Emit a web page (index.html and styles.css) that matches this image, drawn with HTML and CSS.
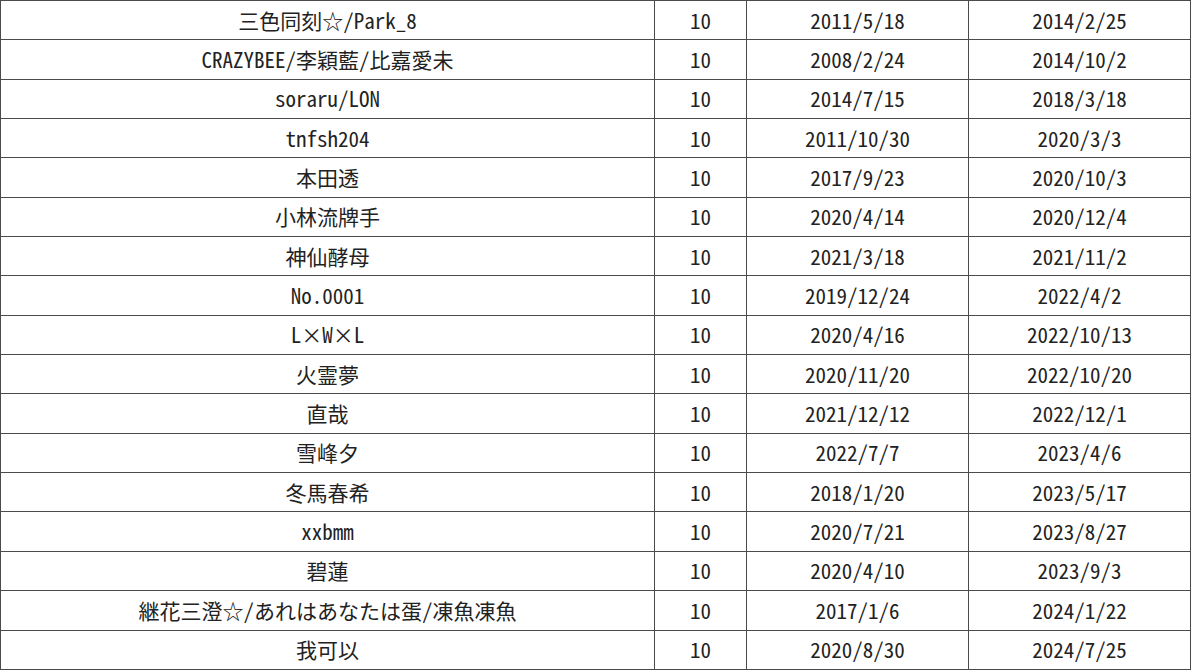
FILE: index.html
```html
<!DOCTYPE html>
<html lang="ja">
<head>
<meta charset="utf-8">
<title>記録</title>
<link rel="stylesheet" href="styles.css">
</head>
<body>
<div class="sheet">
  <div class="cell">三色同刻☆/Park_8</div><div class="cell">10</div><div class="cell">2011/5/18</div><div class="cell">2014/2/25</div>
  <div class="cell">CRAZYBEE/李穎藍/比嘉愛未</div><div class="cell">10</div><div class="cell">2008/2/24</div><div class="cell">2014/10/2</div>
  <div class="cell">soraru/LON</div><div class="cell">10</div><div class="cell">2014/7/15</div><div class="cell">2018/3/18</div>
  <div class="cell">tnfsh204</div><div class="cell">10</div><div class="cell">2011/10/30</div><div class="cell">2020/3/3</div>
  <div class="cell">本田透</div><div class="cell">10</div><div class="cell">2017/9/23</div><div class="cell">2020/10/3</div>
  <div class="cell">小林流牌手</div><div class="cell">10</div><div class="cell">2020/4/14</div><div class="cell">2020/12/4</div>
  <div class="cell">神仙酵母</div><div class="cell">10</div><div class="cell">2021/3/18</div><div class="cell">2021/11/2</div>
  <div class="cell">No.0001</div><div class="cell">10</div><div class="cell">2019/12/24</div><div class="cell">2022/4/2</div>
  <div class="cell">L×W×L</div><div class="cell">10</div><div class="cell">2020/4/16</div><div class="cell">2022/10/13</div>
  <div class="cell">火霊夢</div><div class="cell">10</div><div class="cell">2020/11/20</div><div class="cell">2022/10/20</div>
  <div class="cell">直哉</div><div class="cell">10</div><div class="cell">2021/12/12</div><div class="cell">2022/12/1</div>
  <div class="cell">雪峰夕</div><div class="cell">10</div><div class="cell">2022/7/7</div><div class="cell">2023/4/6</div>
  <div class="cell">冬馬春希</div><div class="cell">10</div><div class="cell">2018/1/20</div><div class="cell">2023/5/17</div>
  <div class="cell">xxbmm</div><div class="cell">10</div><div class="cell">2020/7/21</div><div class="cell">2023/8/27</div>
  <div class="cell">碧蓮</div><div class="cell">10</div><div class="cell">2020/4/10</div><div class="cell">2023/9/3</div>
  <div class="cell">継花三澄☆/あれはあなたは蛋/凍魚凍魚</div><div class="cell">10</div><div class="cell">2017/1/6</div><div class="cell">2024/1/22</div>
  <div class="cell">我可以</div><div class="cell">10</div><div class="cell">2020/8/30</div><div class="cell">2024/7/25</div>
</div>
</body>
</html>
```

FILE: styles.css
```css
html, body {
  margin: 0;
  padding: 0;
  background: #ffffff;
}

.sheet {
  display: grid;
  grid-template-columns: 654px 92px 222px 222px;
  grid-auto-rows: 39.35px;
  width: 1190px;
  border-left: 1px solid #4a4a4a;
  border-top: 1px solid #4a4a4a;
  font-family: "Noto Sans Mono CJK JP", "Noto Sans CJK JP", sans-serif;
  font-feature-settings: "hwid" 1;
  font-size: 21px;
  font-weight: 300;
  color: #222222;
}

.cell {
  display: flex;
  align-items: center;
  justify-content: center;
  border-right: 1px solid #4a4a4a;
  border-bottom: 1px solid #4a4a4a;
  white-space: nowrap;
  line-height: 1;
}
```
